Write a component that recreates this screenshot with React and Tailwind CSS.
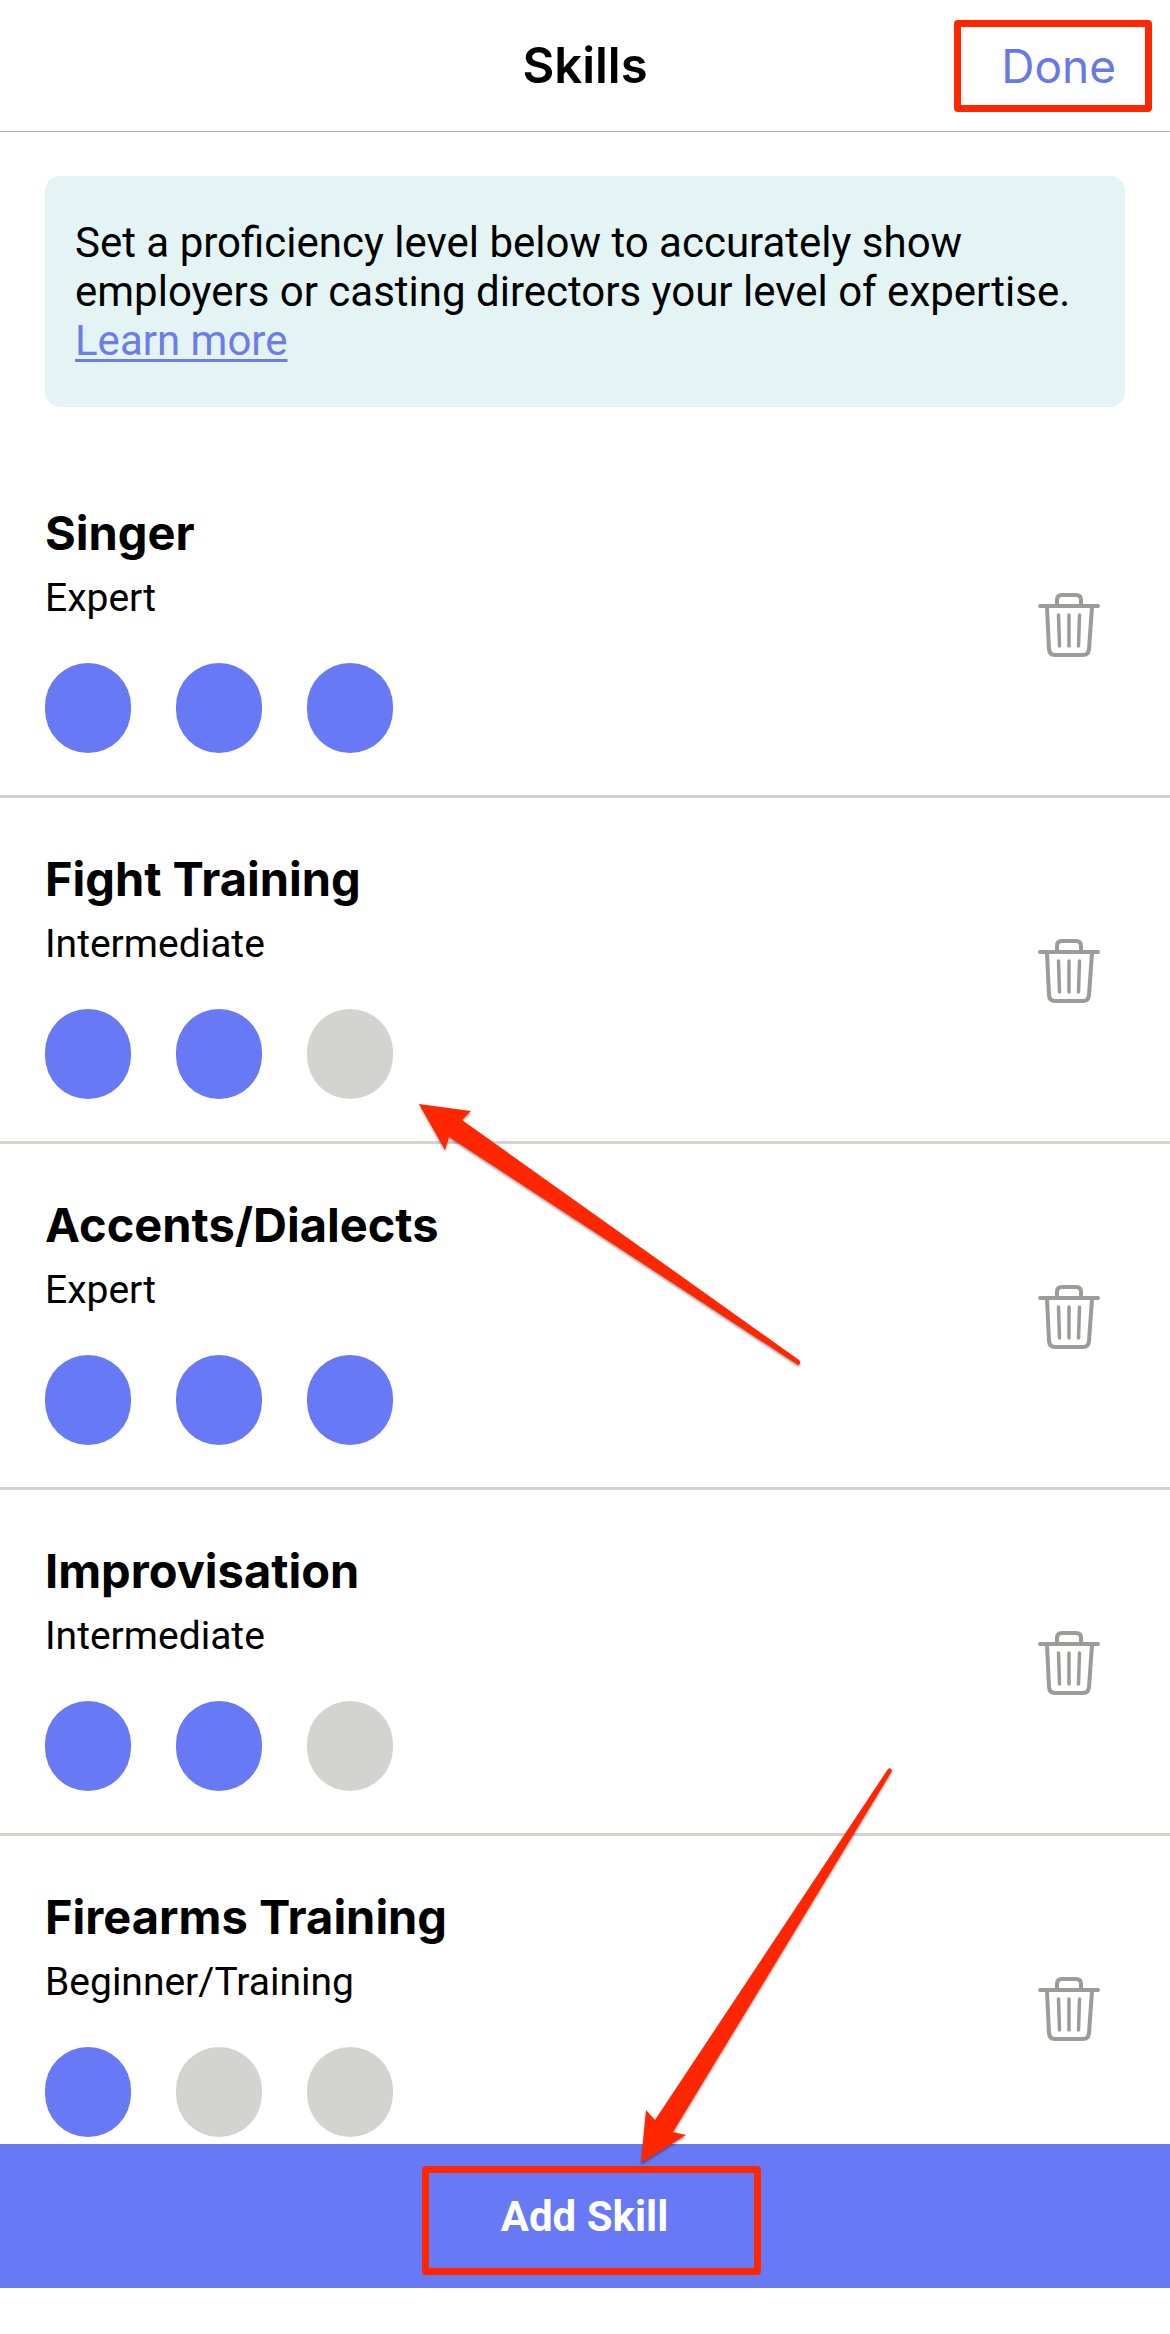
import React, { useState } from 'react';

const LEVELS = ['Beginner/Training', 'Intermediate', 'Expert'];

const initialSkills = [
  { id: 'singer', name: 'Singer', level: 3 },
  { id: 'fight', name: 'Fight Training', level: 2 },
  { id: 'accents', name: 'Accents/Dialects', level: 3 },
  { id: 'improv', name: 'Improvisation', level: 2 },
  { id: 'firearms', name: 'Firearms Training', level: 1 },
];

const TrashIcon = () => (
  <svg className="h-16 w-[62px]" viewBox="0 0 62 64" fill="none" stroke="#9b9b98" strokeLinecap="round" aria-hidden="true">
    <path strokeWidth="4" d="M19 12V7Q19 2 24 2H38Q43 2 43 7V12" />
    <path strokeWidth="4" d="M2 13H60" />
    <path strokeWidth="4" d="M9 14L11 56Q11.500 62 17 62H45Q50.500 62 51 56L54 14" />
    <path strokeWidth="3.500" d="M20.500 22L21.500 53M31 22V53M41.500 22L40.500 53" />
  </svg>
);

const Arrow = ({ className, viewBox, d }) => (
  <svg
    className={`pointer-events-none absolute z-10 overflow-visible drop-shadow-[0_2px_1px_rgba(0,0,0,0.35)] ${className}`}
    viewBox={viewBox}
    aria-hidden="true"
  >
    <path fill="#ff2600" d={d} />
  </svg>
);

const SkillRow = ({ skill, onLevel, onRemove, children }) => (
  <li className="relative flex items-center justify-between border-b-3 border-[#d3d3cf] pt-[51px] pr-[70px] pb-[42px] pl-[45px]">
    <div>
      <h2 className="font-[Inter] text-[47px] leading-[60px] font-bold">{skill.name}</h2>
      <p className="mt-[11px] text-[39px] leading-[48px]">{LEVELS[skill.level - 1]}</p>
      <div className="mt-[41px] flex gap-[45px]" role="radiogroup" aria-label={`${skill.name} level`}>
        {LEVELS.map((label, i) => (
          <input
            key={label}
            type="radio"
            name={skill.id}
            aria-label={label}
            checked={skill.level === i + 1}
            onChange={() => onLevel(i + 1)}
            className={`h-[90px] w-[86px] appearance-none rounded-full ${
              i < skill.level ? 'bg-[#6779f5]' : 'bg-[#d3d4cf]'
            }`}
          />
        ))}
      </div>
    </div>
    <button type="button" aria-label={`Remove ${skill.name}`} onClick={onRemove} className="pb-1.5">
      <TrashIcon />
    </button>
    {children}
  </li>
);

const App = () => {
  const [skills, setSkills] = useState(initialSkills);

  const setLevel = (id, level) =>
    setSkills(skills.map((s) => (s.id === id ? { ...s, level } : s)));

  return (
    <div className="flex h-screen flex-col bg-white font-[Roboto,sans-serif] text-black">
      <header className="grid h-[132px] shrink-0 grid-cols-[1fr_auto_1fr] items-center border-b border-[#b2b2b2] px-[18px]">
        <h1 className="col-start-2 font-[Inter] text-[49px] leading-[60px] font-semibold">Skills</h1>
        <button
          type="button"
          className="h-[92px] justify-self-end rounded-[4px] border-7 border-[#ff2600] pr-[29px] pl-[40px] font-[Inter] text-[46px] leading-[60px] text-[#6779e8]"
        >
          Done
        </button>
      </header>

      <main className="min-h-0 flex-1 overflow-y-auto [scrollbar-width:none]">
        <p className="mx-[45px] mt-[44px] mb-[45px] rounded-[15px] bg-[#e4f4f4] px-[30px] py-[42px] text-[42px] leading-[49px]">
          Set a proficiency level below to accurately show employers or casting directors your level of expertise.{' '}
          <a href="#learn" className="text-[#6c7ce8] underline decoration-3 underline-offset-4">
            Learn more
          </a>
        </p>
        <ul>
          {skills.map((skill) => (
            <SkillRow
              key={skill.id}
              skill={skill}
              onLevel={(level) => setLevel(skill.id, level)}
              onRemove={() => setSkills(skills.filter((s) => s.id !== skill.id))}
            >
              {skill.id === 'fight' && (
                <Arrow
                  className="top-[306px] left-[419px] h-[262px] w-[382px]"
                  viewBox="0 0 382 262"
                  d="M0 0L52 7L43 16L380 256Q383 259 379 261L30 33L26 46Z"
                />
              )}
            </SkillRow>
          ))}
        </ul>
      </main>

      <footer className="relative mb-[46px] flex shrink-0 justify-center bg-[#6779f5] pt-[22px] pb-[13px] pl-[13px]">
        <button
          type="button"
          className="h-[109px] w-[339px] rounded-[4px] border-7 border-[#ff2600] pr-[14px] pb-2 text-[42px] leading-[49px] font-bold text-white"
        >
          Add Skill
        </button>
        <Arrow
          className="top-[-376px] left-[641px] h-[395px] w-[251px]"
          viewBox="0 0 251 395"
          d="M0 395L5 342L14 352L247 1Q250 -1 251 3L32 364L45 367Z"
        />
      </footer>
    </div>
  );
};

export default App;
